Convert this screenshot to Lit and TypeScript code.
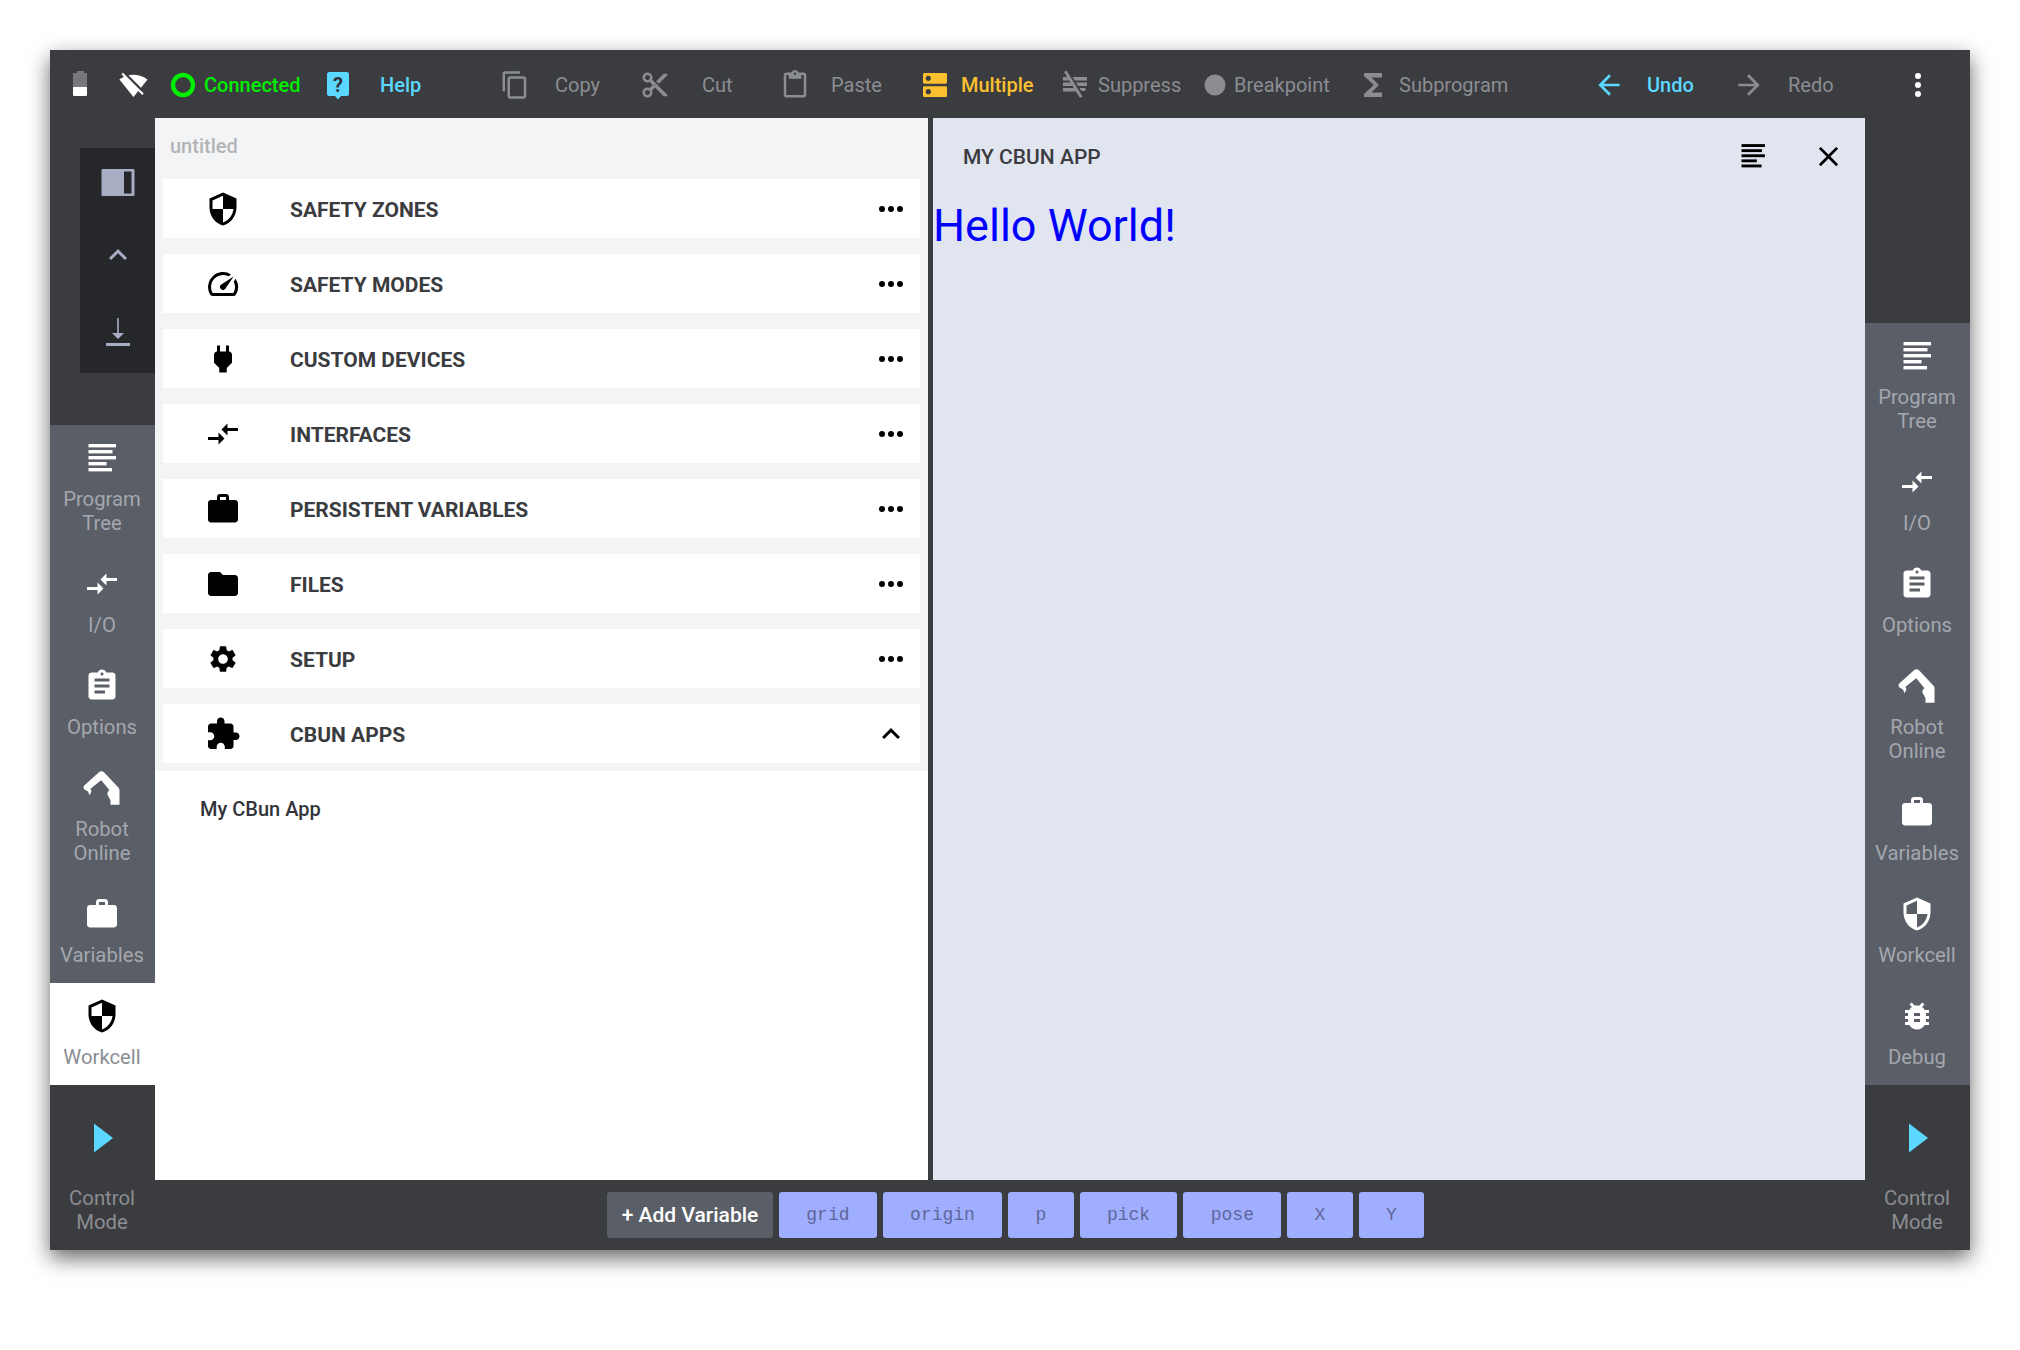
import { LitElement, html, css } from "lit";
import { customElement } from "lit/decorators.js";

// material style glyphs, all in a 24 box unless noted
const P: Record<string, string> = {
  shield: "M12 1L3 5v6c0 5.55 3.84 10.74 9 12 5.16-1.26 9-6.45 9-12V5l-9-4zm0 10.99h7c-.53 4.12-3.28 7.79-7 8.94V12H5V6.3l7-3.11v8.8z",
  speed: "M20.38 8.57l-1.23 1.85a8 8 0 0 1-.22 7.58H5.07A8 8 0 0 1 15.58 6.85l1.85-1.23A10 10 0 0 0 3.35 19a2 2 0 0 0 1.72 1h13.85a2 2 0 0 0 1.74-1 10 10 0 0 0-.27-10.44zm-9.79 6.84a2 2 0 0 0 2.83 0l5.66-8.49-8.49 5.66a2 2 0 0 0 0 2.83z",
  plug: "M16.01 7L16 3h-2v4h-4V3H8v4h-.01C7 6.99 6 7.99 6 8.99v5.49L9.5 18v3h5v-3l3.5-3.51v-5.5c0-1-1-2-1.99-1.99z",
  compare: "M9.01 14H2v2h7.01v3L13 15l-3.99-4v3zm5.98-1v-3H22V8h-7.01V5L11 9l3.99 4z",
  work: "M20 6h-4V4c0-1.11-.89-2-2-2h-4c-1.11 0-2 .89-2 2v2H4c-1.11 0-1.99.89-1.99 2L2 19c0 1.11.89 2 2 2h16c1.11 0 2-.89 2-2V8c0-1.11-.89-2-2-2zm-6 0h-4V4h4v2z",
  folder: "M10 4H4c-1.1 0-1.99.9-1.99 2L2 18c0 1.1.9 2 2 2h16c1.1 0 2-.9 2-2V8c0-1.1-.9-2-2-2h-8l-2-2z",
  gear: "M19.14 12.94c.04-.3.06-.61.06-.94 0-.32-.02-.64-.07-.94l2.03-1.58a.49.49 0 0 0 .12-.61l-1.92-3.32a.488.488 0 0 0-.59-.22l-2.39.96c-.5-.38-1.03-.7-1.62-.94l-.36-2.54a.484.484 0 0 0-.48-.41h-3.84c-.24 0-.43.17-.47.41l-.36 2.54c-.59.24-1.13.57-1.62.94l-2.39-.96c-.22-.08-.47 0-.59.22L2.74 8.87c-.12.21-.08.47.12.61l2.03 1.58c-.05.3-.09.63-.09.94s.02.64.07.94l-2.03 1.58a.49.49 0 0 0-.12.61l1.92 3.32c.12.22.37.29.59.22l2.39-.96c.5.38 1.03.7 1.62.94l.36 2.54c.05.24.24.41.48.41h3.84c.24 0 .44-.17.47-.41l.36-2.54c.59-.24 1.13-.56 1.62-.94l2.39.96c.22.08.47 0 .59-.22l1.92-3.32c.12-.22.07-.47-.12-.61l-2.01-1.58zM12 15.6c-1.98 0-3.6-1.62-3.6-3.6s1.62-3.6 3.6-3.6 3.6 1.62 3.6 3.6-1.62 3.6-3.6 3.6z",
  puzzle: "M20.5 11H19V7c0-1.1-.9-2-2-2h-4V3.5C13 2.12 11.88 1 10.5 1S8 2.12 8 3.5V5H4c-1.1 0-1.99.9-1.99 2v3.8H3.5c1.49 0 2.7 1.21 2.7 2.7s-1.21 2.7-2.7 2.7H2V20c0 1.1.9 2 2 2h3.8v-1.5c0-1.49 1.21-2.7 2.7-2.7 1.49 0 2.7 1.21 2.7 2.7V22H17c1.1 0 2-.9 2-2v-4h1.5c1.38 0 2.5-1.12 2.5-2.5S21.88 11 20.5 11z",
  dots: "M6 10a2 2 0 1 0 0 4 2 2 0 0 0 0-4zm12 0a2 2 0 1 0 0 4 2 2 0 0 0 0-4zm-6 0a2 2 0 1 0 0 4 2 2 0 0 0 0-4z",
  kebab: "M12 8a2 2 0 1 0 0-4 2 2 0 0 0 0 4zm0 2a2 2 0 1 0 0 4 2 2 0 0 0 0-4zm0 6a2 2 0 1 0 0 4 2 2 0 0 0 0-4z",
  less: "M12 8l-6 6 1.41 1.41L12 10.83l4.59 4.58L18 14z",
  assign: "M19 3h-4.18C14.4 1.84 13.3 1 12 1c-1.3 0-2.4.84-2.82 2H5c-1.1 0-2 .9-2 2v14c0 1.1.9 2 2 2h14c1.1 0 2-.9 2-2V5c0-1.1-.9-2-2-2zm-7 0c.55 0 1 .45 1 1s-.45 1-1 1-1-.45-1-1 .45-1 1-1zm2 14H7v-2h7v2zm3-4H7v-2h10v2zm0-4H7V7h10v2z",
  bug: "M20 8h-2.81c-.45-.78-1.07-1.45-1.82-1.96L17 4.41 15.59 3l-2.17 2.17C12.96 5.06 12.49 5 12 5c-.49 0-.96.06-1.41.17L8.41 3 7 4.41l1.62 1.63C7.88 6.55 7.26 7.22 6.81 8H4v2h2.09c-.05.33-.09.66-.09 1v1H4v2h2v1c0 .34.04.67.09 1H4v2h2.81c1.04 1.79 2.97 3 5.19 3s4.15-1.21 5.19-3H20v-2h-2.09c.05-.33.09-.66.09-1v-1h2v-2h-2v-1c0-.34-.04-.67-.09-1H20V8zm-6 8h-4v-2h4v2zm0-4h-4v-2h4v2z",
  wifiOff: "M23.64 7c-.45-.34-4.93-4-11.64-4-1.5 0-2.89.19-4.15.48L18.18 13.8 23.64 7zm-6.6 8.22L3.27 1.44 2 2.72l2.05 2.06C1.91 5.76.59 6.82.36 7l11.63 14.49.01.01.01-.01 3.9-4.86 3.32 3.32 1.27-1.27-3.46-3.46z",
  copy: "M16 1H4c-1.1 0-2 .9-2 2v14h2V3h12V1zm3 4H8c-1.1 0-2 .9-2 2v14c0 1.1.9 2 2 2h11c1.1 0 2-.9 2-2V7c0-1.1-.9-2-2-2zm0 16H8V7h11v14z",
  cut: "M9.64 7.64c.23-.5.36-1.05.36-1.64 0-2.21-1.79-4-4-4S2 3.79 2 6s1.79 4 4 4c.59 0 1.14-.13 1.64-.36L10 12l-2.36 2.36C7.14 14.13 6.59 14 6 14c-2.21 0-4 1.79-4 4s1.79 4 4 4 4-1.79 4-4c0-.59-.13-1.14-.36-1.64L12 14l7 7h3v-1L9.64 7.64zM6 8c-1.1 0-2-.89-2-2s.9-2 2-2 2 .89 2 2-.9 2-2 2zm0 12c-1.1 0-2-.89-2-2s.9-2 2-2 2 .89 2 2-.9 2-2 2zm6-7.5c-.28 0-.5-.22-.5-.5s.22-.5.5-.5.5.22.5.5-.22.5-.5.5zM19 3l-6 6 2 2 7-7V3z",
  paste: "M19 2h-4.18C14.4.84 13.3 0 12 0c-1.3 0-2.4.84-2.82 2H5c-1.1 0-2 .9-2 2v16c0 1.1.9 2 2 2h14c1.1 0 2-.9 2-2V4c0-1.1-.9-2-2-2zm-7 0c.55 0 1 .45 1 1s-.45 1-1 1-1-.45-1-1 .45-1 1-1zm7 18H5V4h2v3h10V4h2v16z",
  dns: "M20 13H4c-.55 0-1 .45-1 1v6c0 .55.45 1 1 1h16c.55 0 1-.45 1-1v-6c0-.55-.45-1-1-1zM7 19c-1.1 0-2-.9-2-2s.9-2 2-2 2 .9 2 2-.9 2-2 2zM20 3H4c-.55 0-1 .45-1 1v6c0 .55.45 1 1 1h16c.55 0 1-.45 1-1V4c0-.55-.45-1-1-1zM7 9c-1.1 0-2-.9-2-2s.9-2 2-2 2 .9 2 2-.9 2-2 2z",
  sigma: "M18 4H6v2l6.5 6L6 18v2h12v-3h-7l5-5-5-5h7z",
  back: "M20 11H7.83l5.59-5.59L12 4l-8 8 8 8 1.41-1.41L7.83 13H20v-2z",
  forward: "M4 11h12.17l-5.59-5.59L12 4l8 8-8 8-1.41-1.41L16.17 13H4v-2z",
  close: "M19 6.41L17.59 5 12 10.59 6.41 5 5 6.41 10.59 12 5 17.59 6.41 19 12 13.41 17.59 19 19 17.59 13.41 12z",
};

const icon = (name: string, size = 36, box = "0 0 24 24") =>
  html`<svg class="ico" width=${size} height=${size} viewBox=${box}><path d=${P[name]} fill="currentColor"></path></svg>`;

// five lines, program tree
const tree = (size = 40) => html`<svg class="ico" width=${size} height=${size} viewBox="0 0 40 40" fill="currentColor">
  <rect x="6.5" y="6" width="27.5" height="3.4"></rect>
  <rect x="6.5" y="12" width="24" height="3.4"></rect>
  <rect x="6.5" y="18" width="27.5" height="3.4"></rect>
  <rect x="6.5" y="24" width="18" height="3.4"></rect>
  <rect x="6.5" y="30" width="23.5" height="3.4"></rect>
</svg>`;

const robot = html`<svg class="ico" width="40" height="40" viewBox="0 0 40 40">
  <path fill="currentColor" d="M19.2 3.300C20.500 3.300 21.500 3.900 22.500 4.700L35.800 19C37 20.200 37.500 21 37.500 22.300V36.700H28.500V32.300L25.800 27.300C24.800 25.500 25.500 23.500 27.500 22.300L19.200 12.300L8.500 20.700L9.500 23.500L7.500 27.300L6 23.500L2.500 21.500C1.300 20.500 1.200 18.500 2.500 17.300L17 4.200C17.700 3.600 18.400 3.300 19.200 3.300Z"></path>
</svg>`;

const play = html`<svg class="ico" width="40" height="40" viewBox="0 0 40 40"><path fill="#5bd8ff" d="M12 5.500L31 20L12 34.500Z"></path></svg>`;

const battery = html`<svg class="ico" width="40" height="40" viewBox="0 0 40 40">
  <path fill="#77787d" d="M17 6H24V8H27V22H13V8H17Z"></path>
  <path fill="#fff" d="M13 22H27V29.500C27 30.500 26.500 31 25.500 31H14.500C13.500 31 13 30.500 13 29.500Z"></path>
</svg>`;

const ring = html`<svg class="ico" width="40" height="40" viewBox="0 0 40 40"><circle cx="20" cy="20" r="10" fill="none" stroke="#00ee00" stroke-width="4.400"></circle></svg>`;

const helpBubble = html`<svg class="ico" width="40" height="40" viewBox="0 0 40 40">
  <path fill="#5bd8ff" d="M11 7H29C30 7 31 8 31 9V29C31 30 30 31 29 31H23L20 34.500L17 31H11C10 31 9 30 9 29V9C9 8 10 7 11 7Z"></path>
  <text x="20" y="26.500" text-anchor="middle" font-size="20" font-weight="700" font-family="Roboto, sans-serif" fill="#2f3138">?</text>
</svg>`;

const suppress = html`<svg class="ico" width="40" height="40" viewBox="0 0 40 40" fill="currentColor">
  <path d="M8 12H12.500L14.800 15.500H8ZM8 17.500H16L18.200 21H8ZM8 23H19.500L21.700 26.500H8Z"></path>
  <path d="M17.500 12H32V15.500H19.700ZM21 17.500H32V21H23.200ZM24.500 23H30.500V26H26.300Z"></path>
  <path d="M9 7L11.500 5.500L27.500 31.500L25 33Z"></path>
</svg>`;

const dot = html`<svg class="ico" width="40" height="40" viewBox="0 0 40 40"><circle cx="20" cy="20" r="10.500" fill="currentColor"></circle></svg>`;

const panelToggle = html`<svg class="ico" width="40" height="40" viewBox="0 0 40 40">
  <path fill="#a7adc2" d="M5 7H35C36 7 36.500 7.500 36.500 8.500V32.500C36.500 33.500 36 34 35 34H5C4 34 3.500 33.500 3.500 32.500V8.500C3.500 7.500 4 7 5 7Z"></path>
  <rect x="26" y="9.500" width="7.500" height="22" fill="#26272b"></rect>
</svg>`;

const download = html`<svg class="ico" width="40" height="40" viewBox="0 0 40 40">
  <path fill="#a7adc2" d="M19.200 6H20.800V21H26L20 27L14 21H19.200ZM8 31H32V34H8Z"></path>
</svg>`;

type Tool = { cx: number; lx?: number; g: unknown; label?: string; tone: string };

const TOOLS: Tool[] = [
  { cx: 80, g: battery, tone: "" },
  { cx: 133, g: icon("wifiOff", 29), tone: "white" },
  { cx: 183, lx: 204, g: ring, label: "Connected", tone: "green" },
  { cx: 338, lx: 380, g: helpBubble, label: "Help", tone: "blue" },
  { cx: 515, lx: 555, g: icon("copy", 30), label: "Copy", tone: "grey" },
  { cx: 655, lx: 702, g: icon("cut", 30), label: "Cut", tone: "grey" },
  { cx: 795, lx: 831, g: icon("paste", 30), label: "Paste", tone: "grey" },
  { cx: 935, lx: 961, g: icon("dns", 32), label: "Multiple", tone: "amber" },
  { cx: 1075, lx: 1098, g: suppress, label: "Suppress", tone: "grey" },
  { cx: 1215, lx: 1234, g: dot, label: "Breakpoint", tone: "grey" },
  { cx: 1373, lx: 1399, g: icon("sigma", 36), label: "Subprogram", tone: "grey" },
  { cx: 1609, lx: 1647, g: icon("back", 32), label: "Undo", tone: "blue" },
  { cx: 1749, lx: 1788, g: icon("forward", 32), label: "Redo", tone: "grey" },
  { cx: 1918, g: icon("kebab", 36), tone: "white" },
];

const ROWS = [
  ["SAFETY ZONES", icon("shield")],
  ["SAFETY MODES", icon("speed")],
  ["CUSTOM DEVICES", icon("plug")],
  ["INTERFACES", icon("compare")],
  ["PERSISTENT VARIABLES", icon("work")],
  ["FILES", icon("folder")],
  ["SETUP", icon("gear", 36, "-1.500 -1.500 27 27")],
  ["CBUN APPS", icon("puzzle")],
] as const;

const NAV: Record<string, [string[], unknown]> = {
  tree: [["Program", "Tree"], tree()],
  io: [["I/O"], icon("compare")],
  options: [["Options"], icon("assign")],
  robot: [["Robot", "Online"], robot],
  vars: [["Variables"], icon("work")],
  workcell: [["Workcell"], icon("shield")],
  debug: [["Debug"], icon("bug")],
};

const VARS = ["grid", "origin", "p", "pick", "pose", "X", "Y"];

@customElement("app-root")
export class AppRoot extends LitElement {
  static styles = css`
    :host {
      display: block;
      padding: 50px;
      font-family: Roboto, "Liberation Sans", sans-serif;
    }

    .ico { display: block; flex: none; }

    .window {
      width: 1920px;
      height: 1200px;
      background: #3b3c40;
      box-shadow: 0 8px 20px rgba(0, 0, 0, 0.6);
      display: grid;
      grid-template-columns: 105px 1710px 105px;
      grid-template-rows: 68px 1062px 70px;
    }

    /* top bar */
    .top {
      grid-column: 1 / 4;
      grid-row: 1;
      display: flex;
      align-items: center;
      padding-top: 2px;
      box-sizing: border-box;
      font-size: 20px;
    }
    .tool { display: flex; align-items: center; flex: none; white-space: nowrap; }
    .cell { width: 40px; height: 40px; display: flex; align-items: center; justify-content: center; flex: none; }
    .white { color: #fff; }
    .grey { color: #8b8d92; }
    .green { color: #00ee00; font-weight: 500; }
    .blue { color: #5bd8ff; font-weight: 500; }
    .amber { color: #fdc02f; font-weight: 500; }

    /* side columns */
    .side { display: flex; flex-direction: column; grid-row: 2 / 4; }
    .side.l { grid-column: 1; }
    .side.r { grid-column: 3; }
    .left-top { height: 307px; padding-top: 30px; box-sizing: border-box; flex: none; }
    .right-top { height: 205px; flex: none; }
    .tray {
      margin-left: 30px;
      height: 225px;
      background: #26272b;
      color: #a7adc2;
      display: flex;
      flex-direction: column;
      align-items: center;
      padding-top: 14px;
      box-sizing: border-box;
    }
    .tray .mid { margin: 35px 0 39px; }

    .nav { background: #5a5e67; flex: none; }
    .item {
      color: #fff;
      padding: 13px 1px 16px 0;
      display: flex;
      flex-direction: column;
      align-items: center;
      font-size: 20.3px;
      line-height: 24px;
    }
    .item span { color: #a4a7ae; display: block; text-align: center; }
    .item .cell { margin-bottom: 9px; }
    .item.on { background: #fff; color: #000; }
    .item.on span { color: #8b8d92; }
    .item.mode { padding: 33px 1px 16px 0; flex: 1; box-sizing: border-box; }
    .item.mode .cell { margin-bottom: 28px; }
    .item.mode span { color: #8b8d92; }

    /* middle */
    .main { grid-column: 2; grid-row: 2; display: flex; background: #3b3c40; min-height: 0; }
    .list { width: 773px; background: #fff; display: flex; flex-direction: column; flex: none; }
    .stack { background: #f3f4f6; padding: 0 8px 8px; display: flex; flex-direction: column; gap: 16px; }
    .name {
      height: 61px;
      margin-bottom: -16px;
      display: flex;
      align-items: center;
      padding: 0 0 5px 7px;
      box-sizing: border-box;
      color: #b3b4b8;
      font-size: 20px;
      font-weight: 500;
    }
    .row {
      height: 59px;
      background: #fff;
      display: flex;
      align-items: center;
      color: #3b3c40;
      font-size: 21px;
      font-weight: 700;
    }
    .row .lead { width: 120px; display: flex; justify-content: center; flex: none; color: #000; }
    .row .txt { margin-left: 7px; padding-top: 2px; flex: 1; }
    .row .act { margin-right: 11px; color: #000; }
    .sub { padding: 26px 0 0 45px; font-size: 20px; line-height: 24px; font-weight: 500; color: #33343a; }

    .panel { width: 932px; margin-left: 5px; background: #e1e5f0; flex: none; }
    .head {
      height: 78px;
      display: flex;
      align-items: center;
      padding: 0 17px 0 30px;
      color: #3b3c40;
      font-size: 21px;
      font-weight: 500;
    }
    .head .title { flex: 1; }
    .head .cell { color: #000; margin-top: -2px; }
    .head .cell + .cell { margin-left: 35px; }
    .hello { margin: 0; font-size: 45px; line-height: 60px; font-weight: 400; color: #0000ff; }

    /* variables */
    .bottom { grid-column: 2; grid-row: 3; display: flex; gap: 6px; padding: 12px 0 12px 452px; box-sizing: border-box; }
    .btn {
      height: 46px;
      border-radius: 3px;
      display: flex;
      align-items: center;
      justify-content: center;
    }
    .add { width: 166px; background: #5a5e67; color: #fff; font-size: 21px; font-weight: 500; }
    .var {
      padding: 0 27.300px;
      background: #a0aeff;
      color: #5f669a;
      font-family: "Liberation Mono", monospace;
      font-size: 18px;
    }
  `;

  private navItem(key: string, active = "") {
    const [lines, g] = NAV[key];
    return html`<div class="item ${key === active ? "on" : ""}">
      <div class="cell">${g}</div>
      ${lines.map((l) => html`<span>${l}</span>`)}
    </div>`;
  }

  private controlMode() {
    return html`<div class="item mode"><div class="cell">${play}</div><span>Control</span><span>Mode</span></div>`;
  }

  render() {
    return html`<div class="window">
      <div class="top">
        ${TOOLS.map((t, i) => {
          // toolbar positions are the data here: icon centre and label start
          const x = t.cx - 70;
          const next = TOOLS[i + 1] ? TOOLS[i + 1].cx - 70 : x + 40;
          const first = i === 0 ? "margin-left:10px;" : "";
          return html`<div class="tool ${t.tone}" style="${first}width:${next - x}px">
            <div class="cell">${t.g}</div>
            ${t.label
              ? html`<span style="margin-left:${(t.lx ?? 0) - t.cx - 20}px">${t.label}</span>`
              : ""}
          </div>`;
        })}
      </div>

      <div class="side l">
        <div class="left-top">
          <div class="tray">
            ${panelToggle}
            <div class="mid">${icon("less", 36)}</div>
            ${download}
          </div>
        </div>
        <div class="nav">
          ${["tree", "io", "options", "robot", "vars", "workcell"].map((k) => this.navItem(k, "workcell"))}
        </div>
        ${this.controlMode()}
      </div>

      <div class="main">
        <div class="list">
          <div class="stack">
            <div class="name">untitled</div>
            ${ROWS.map(
              ([label, g], i) => html`<div class="row">
                <div class="lead">${g}</div>
                <div class="txt">${label}</div>
                <div class="act">${icon(i === ROWS.length - 1 ? "less" : "dots")}</div>
              </div>`
            )}
          </div>
          <div class="sub">My CBun App</div>
        </div>
        <div class="panel">
          <div class="head">
            <div class="title">MY CBUN APP</div>
            <div class="cell">${tree(34)}</div>
            <div class="cell">${icon("close", 33)}</div>
          </div>
          <h1 class="hello">Hello World!</h1>
        </div>
      </div>

      <div class="side r">
        <div class="right-top"></div>
        <div class="nav">
          ${["tree", "io", "options", "robot", "vars", "workcell", "debug"].map((k) => this.navItem(k))}
        </div>
        ${this.controlMode()}
      </div>

      <div class="bottom">
        <div class="btn add">+ Add Variable</div>
        ${VARS.map((v) => html`<div class="btn var">${v}</div>`)}
      </div>
    </div>`;
  }
}
